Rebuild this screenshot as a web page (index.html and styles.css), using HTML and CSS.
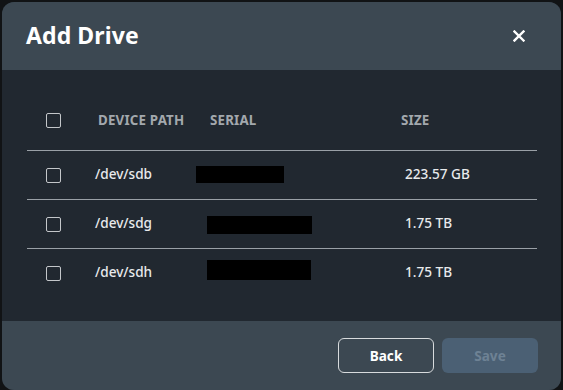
FILE: index.html
```html
<!DOCTYPE html>
<html>
<head>
<meta charset="utf-8">
<link rel="stylesheet" href="styles.css">
</head>
<body>
<div class="dialog">
  <div class="head">
    <h1 class="title">Add Drive</h1>
    <svg class="close" width="12" height="12" viewBox="0 0 12 12"><path d="M1.5 1.5 L10.5 10.5 M10.5 1.5 L1.5 10.5" stroke="#fff" stroke-width="2.4" stroke-linecap="square"/></svg>
  </div>
  <div class="body">
    <div class="table">
      <div class="row hrow">
        <div class="cb-cell"><span class="cb"></span></div>
        <div class="th th-path">DEVICE PATH</div>
        <div class="th th-serial">SERIAL</div>
        <div class="th th-size">SIZE</div>
      </div>
      <div class="row drow">
        <div class="cb-cell"><span class="cb"></span></div>
        <div class="td txt">/dev/sdb</div>
        <div class="td"><span class="redact r1"></span></div>
        <div class="td txt td-size">223.57 GB</div>
      </div>
      <div class="row drow">
        <div class="cb-cell"><span class="cb"></span></div>
        <div class="td txt">/dev/sdg</div>
        <div class="td"><span class="redact r2"></span></div>
        <div class="td txt td-size">1.75 TB</div>
      </div>
      <div class="row drow last">
        <div class="cb-cell"><span class="cb"></span></div>
        <div class="td txt">/dev/sdh</div>
        <div class="td"><span class="redact r3"></span></div>
        <div class="td txt td-size">1.75 TB</div>
      </div>
    </div>
  </div>
  <div class="foot">
    <button class="btn back">Back</button>
    <button class="btn save">Save</button>
  </div>
</div>
</body>
</html>
```
FILE: styles.css
```css
html, body { margin: 0; padding: 0; }
body {
  background: #111315;
  width: 563px;
  height: 390px;
  overflow: hidden;
  padding: 2px 0 0 2px;
  box-sizing: border-box;
  font-family: "Noto Sans", "Open Sans", sans-serif;
}
.dialog {
  width: 559px;
  height: 388px;
  border-radius: 12px;
  overflow: hidden;
  background: #212830;
  display: flex;
  flex-direction: column;
}
.head {
  height: 68px;
  background: #3c4852;
  display: flex;
  align-items: center;
  justify-content: space-between;
  padding: 0 36px 0 24px;
  box-sizing: border-box;
}
.title {
  margin: 0;
  color: #fff;
  font-size: 23px;
  font-weight: 700;
  letter-spacing: 0.1px;
  position: relative;
  top: -1px;
}
.close { display: block; }
.body {
  height: 251px;
  padding: 30px 24px 0 25px;
  box-sizing: border-box;
}
.row {
  display: grid;
  grid-template-columns: 68px 101px 205px 1fr;
  align-items: center;
  border-bottom: 1px solid #9aa0a6;
}
.row.last { border-bottom: none; }
.hrow { height: 51px; padding-bottom: 10px; box-sizing: border-box; }
.drow { height: 48px; }
.cb-cell { padding-left: 19px; display: flex; }
.cb {
  width: 13px;
  height: 13px;
  border: 1.5px solid #c4c7ca;
  border-radius: 2px;
  display: block;
}
.th {
  color: #a3a8ad;
  font-weight: 700;
  font-size: 13.3px;
  letter-spacing: 0.2px;
}
.th-path { padding-left: 3px; }
.th-serial { padding-left: 14px; }
.td {
  color: #e8eaec;
  font-size: 13.6px;
  font-weight: 500;
  display: flex;
  align-items: center;
}
.txt { padding-bottom: 3px; }
.td-size { padding-left: 4px; }
.redact { display: block; background: #000; }
.r1 { width: 88px; height: 17px; margin-top: -1px; }
.r2 { width: 105px; height: 18px; margin-left: 11px; margin-top: 2px; }
.r3 { width: 104px; height: 20px; margin-left: 11px; margin-top: -7px; }
.foot {
  flex: 1;
  background: #3c4852;
  display: flex;
  justify-content: flex-end;
  align-items: flex-start;
  gap: 8px;
  padding: 17px 23px 0 0;
}
.btn {
  width: 96px;
  height: 35px;
  border-radius: 6px;
  font-family: inherit;
  font-size: 13.6px;
  font-weight: 700;
}
.back {
  background: transparent;
  border: 1px solid #d8dbdd;
  color: #fff;
}
.save {
  background: #4b6074;
  border: none;
  color: #6e8294;
}
```
